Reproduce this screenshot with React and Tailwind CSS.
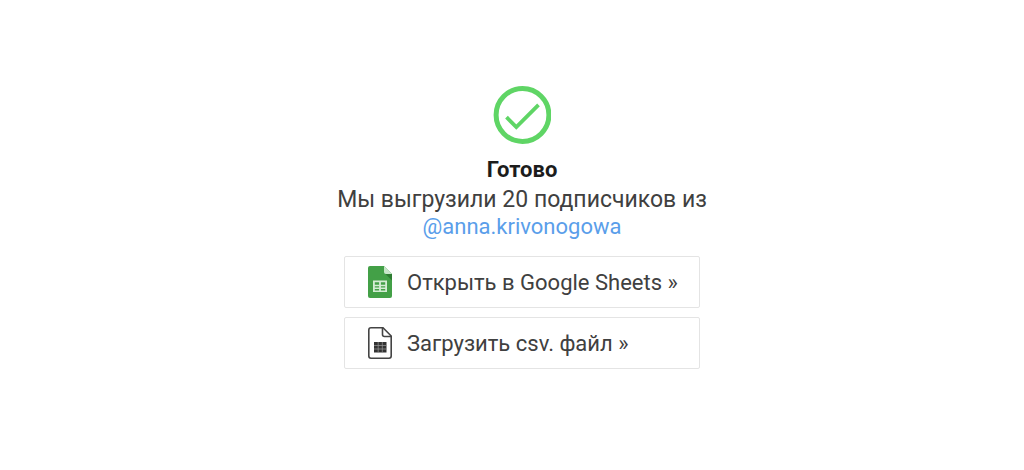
import React from 'react';

const CheckIcon = () => (
  <svg viewBox="0 0 58 58" className="w-[58px] h-[58px]" fill="none" stroke="#5fd565" aria-hidden="true">
    <circle cx="29.5" cy="29" r="26.4" strokeWidth="5" />
    <path d="M13.5 31.2 23.3 41 45.5 18.8" strokeWidth="3.8" />
  </svg>
);

const SheetsIcon = () => (
  <svg viewBox="0 0 24 32" className="w-6 h-8 shrink-0" aria-hidden="true">
    <path d="M2 0H16L24 8V30a2 2 0 0 1-2 2H2a2 2 0 0 1-2-2V2a2 2 0 0 1 2-2Z" fill="#43a047" />
    <path d="M17.5 8H24v6.5Z" fill="#2e7d32" />
    <path d="M16 0 24 8H18a2 2 0 0 1-2-2Z" fill="#c8e6c9" />
    <path d="M5 14.5H19V26H5ZM6.8 16.2V18.8H11.1V16.2ZM12.9 16.2V18.8H17.2V16.2ZM6.8 20.2V21.6H11.1V20.2ZM12.9 20.2V21.6H17.2V20.2ZM6.8 23V24.4H11.1V23ZM12.9 23V24.4H17.2V23Z" fill="#d3ecd4" fillRule="evenodd" />
  </svg>
);

const CsvIcon = () => (
  <svg viewBox="0 0 24 32" className="w-6 h-8 shrink-0" fill="none" stroke="#444" strokeWidth="1.6" aria-hidden="true">
    <path d="M3 .8H15L23.2 9V29a2.2 2.2 0 0 1-2.2 2.2H3A2.2 2.2 0 0 1 .8 29V3A2.2 2.2 0 0 1 3 .8Z" />
    <path d="M14.5 .8V7.5a2 2 0 0 0 2 2H23.2" />
    <path d="M6 15H18.5V25.5H6Z" fill="#333" stroke="none" />
    <path d="M6 18.5H18.5M6 22H18.5M10.2 15V25.5M14.3 15V25.5" stroke="#999" strokeWidth=".7" />
  </svg>
);

const actions = [
  { label: 'Открыть в Google Sheets »', icon: SheetsIcon },
  { label: 'Загрузить csv. файл »', icon: CsvIcon },
];

const App = () => {
  return (
    <main className="min-h-screen bg-white flex flex-col items-center pt-[86px] pb-10 pl-5 font-['Roboto',sans-serif] text-[22px] leading-[27px] text-[#404040]">
      <CheckIcon />
      <h1 className="mt-3 font-bold text-[#1c1c1c]">Готово</h1>
      <p className="mt-[3px] text-center text-[23px] leading-[27px]">
        Мы выгрузили 20 подписчиков из
      </p>
      <a href="#profile" className="text-[#5a9eea]">@anna.krivonogowa</a>
      <div className="mt-4 w-full max-w-[356px] flex flex-col gap-[9px]">
        {actions.map((item) => (
          <button
            key={item.label}
            type="button"
            className="flex items-center gap-[15px] h-[52px] pl-[23px] pr-4 border border-[#e4e4e4] rounded-xs text-left whitespace-nowrap cursor-pointer"
          >
            <item.icon />
            {item.label}
          </button>
        ))}
      </div>
    </main>
  );
};

export default App;
